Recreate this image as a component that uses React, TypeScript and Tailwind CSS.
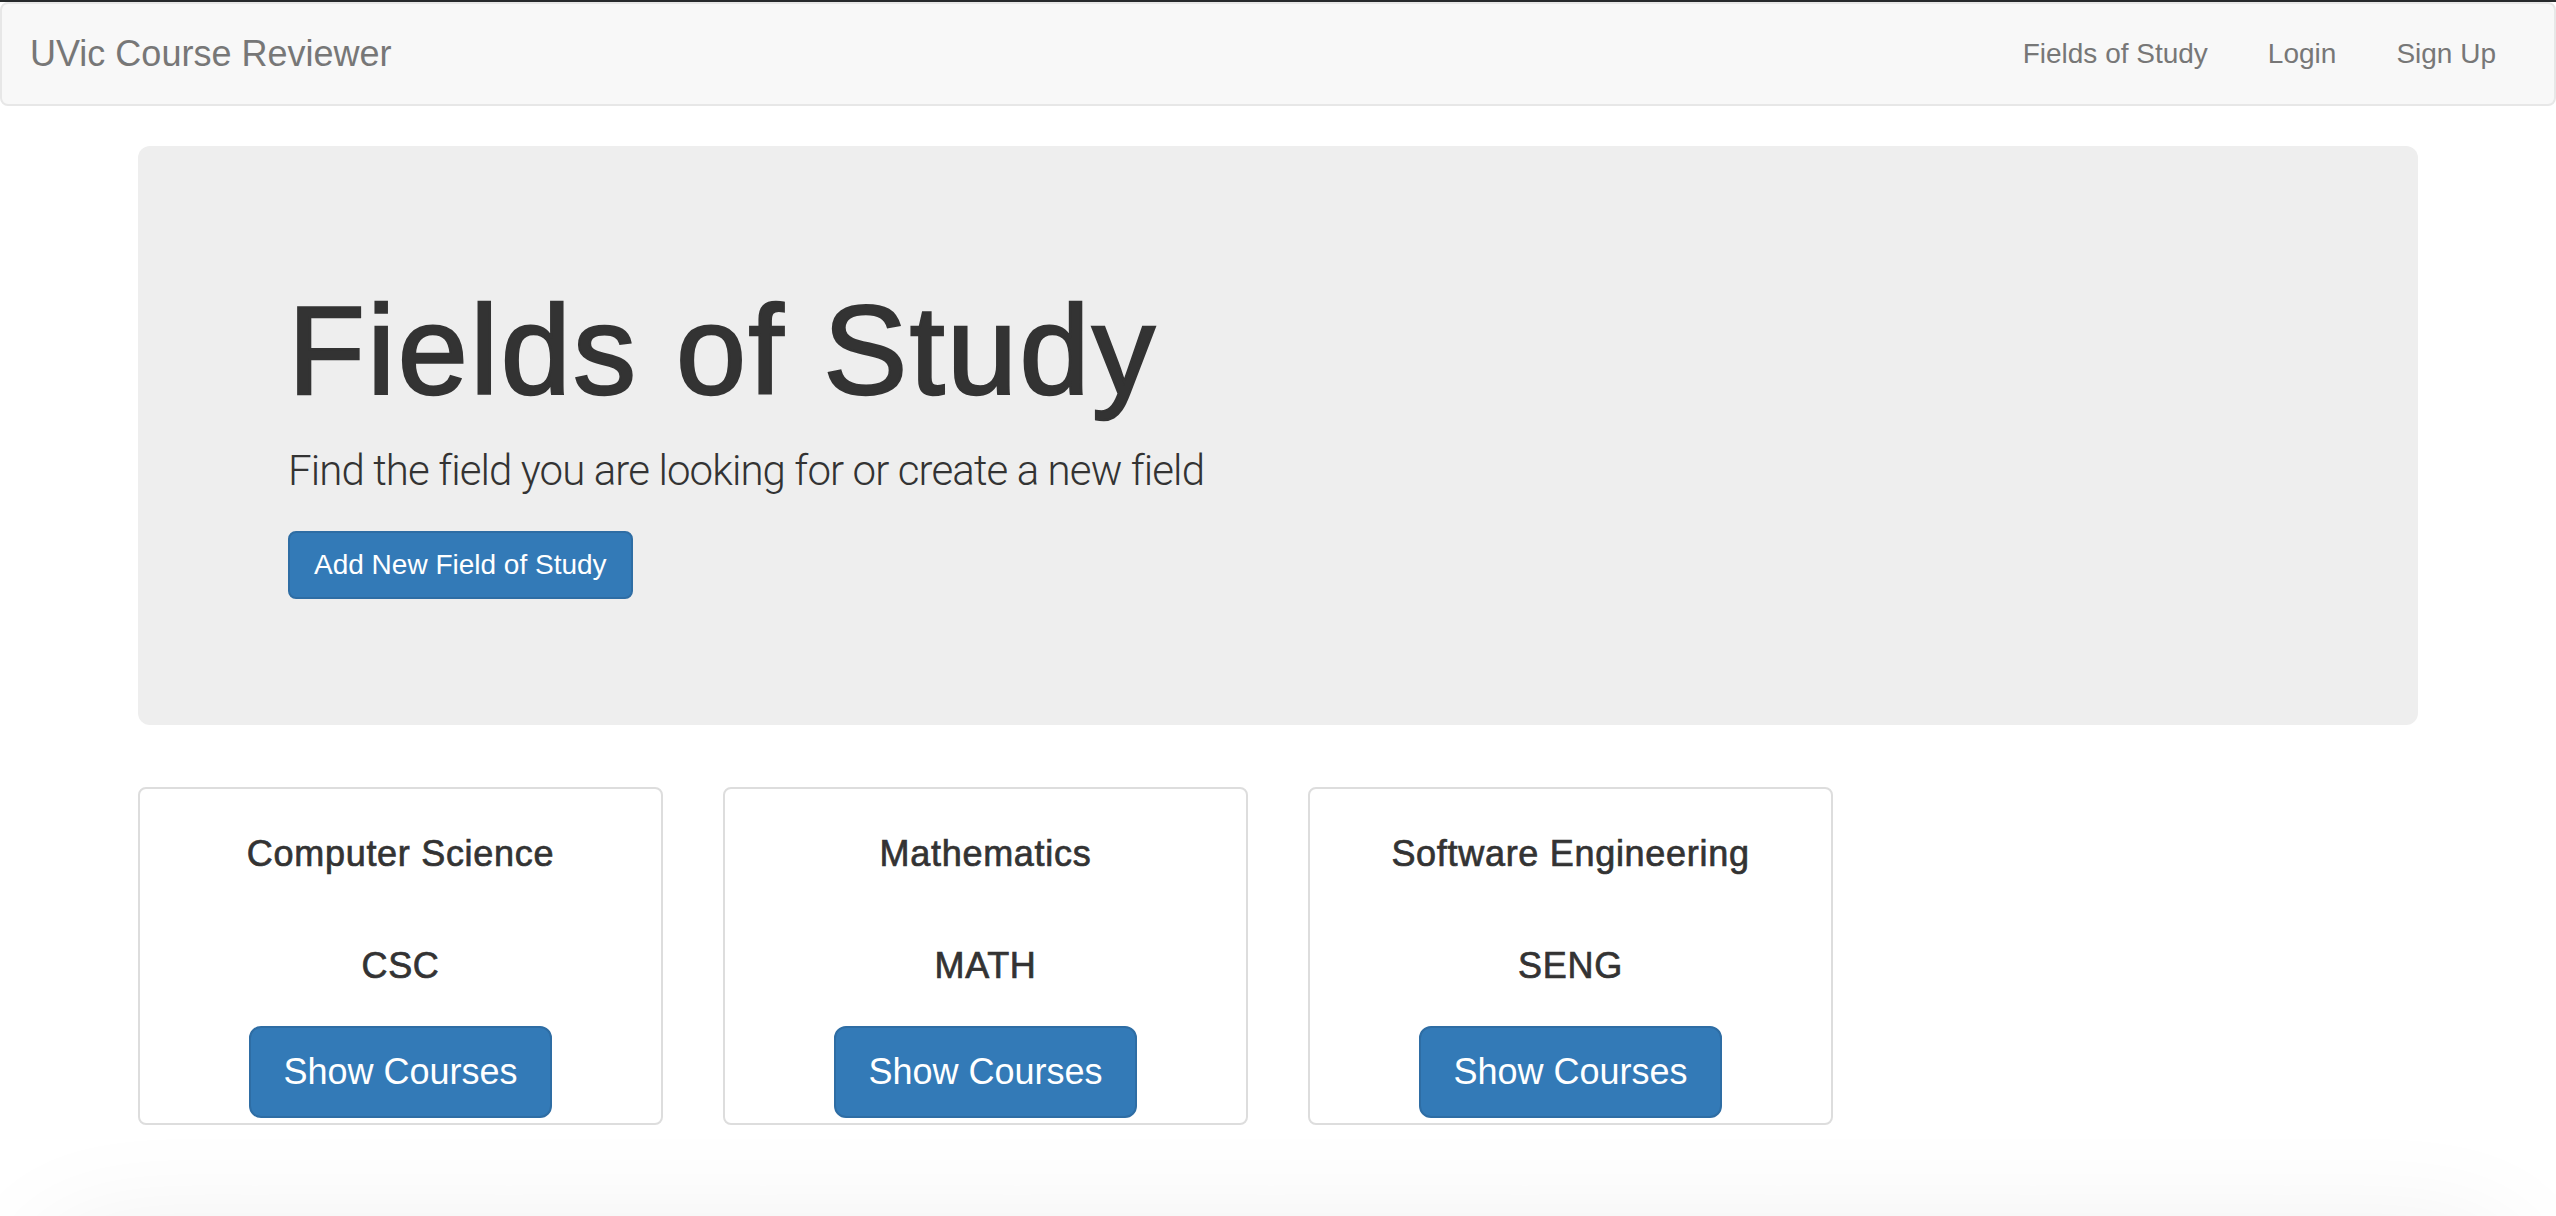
import React from "react";

const fields = [
  { name: "Computer Science", code: "CSC" },
  { name: "Mathematics", code: "MATH" },
  { name: "Software Engineering", code: "SENG" },
];

export default function App() {
  return (
    <div className="w-full h-[1216px] overflow-hidden bg-white text-[#333] font-['Liberation_Sans',Arial,sans-serif]">
      <div className="h-[2px] bg-[#272a2c]" />
      <nav className="h-[104px] bg-[#f8f8f8] border-2 border-[#e7e7e7] rounded-[8px] flex items-center justify-between pl-[28px] pr-[28px]">
        <a className="text-[36px] leading-[40px] text-[#777]">UVic Course Reviewer</a>
        <ul className="flex items-center">
          <li className="px-[30px] text-[28px] leading-[40px] text-[#777]">Fields of Study</li>
          <li className="px-[30px] text-[28px] leading-[40px] text-[#777]">Login</li>
          <li className="px-[30px] text-[28px] leading-[40px] text-[#777]">Sign Up</li>
        </ul>
      </nav>

      <div className="w-[2340px] mx-auto px-[30px]">
        <div className="mt-[40px] bg-[#eeeeee] rounded-[12px] px-[120px] py-[96px]">
          <div className="px-[30px]">
            <h1 className="mt-[40px] mb-[20px] text-[126px] leading-[138.6px] tracking-[2.4px] [-webkit-text-stroke:2.4px_#333] text-[#333]">
              Fields of Study
            </h1>
            <p className="mb-[30px] text-[42px] leading-[60px] tracking-[-0.9px] font-light font-['Roboto',sans-serif] text-[#333]">
              Find the field you are looking for or create a new field
            </p>
            <div className="mb-[30px]">
              <button className="h-[68px] px-[24px] bg-[#337ab7] border-2 border-[#2e6da4] rounded-[8px] text-white text-[28px] leading-[40px]">
                Add New Field of Study
              </button>
            </div>
          </div>
        </div>

        <div className="mt-[62px] flex gap-[60px]">
          {fields.map((f) => (
            <div
              key={f.code}
              className="w-[525px] h-[338px] border-2 border-[#dddddd] rounded-[8px] flex flex-col items-center pt-[45px]"
            >
              <h4 className="text-[36px] leading-[40px] tracking-[0.7px] [-webkit-text-stroke:0.7px_#333] text-[#333]">
                {f.name}
              </h4>
              <h4 className="mt-[72px] text-[36px] leading-[40px] tracking-[0.7px] [-webkit-text-stroke:0.7px_#333] text-[#333]">
                {f.code}
              </h4>
              <button className="mt-[40px] h-[92px] px-[32px] bg-[#337ab7] border-2 border-[#2e6da4] rounded-[12px] text-white text-[36px] leading-[48px]">
                Show Courses
              </button>
            </div>
          ))}
        </div>
      </div>

      <div className="mt-[110px] mx-[40px] h-[300px] rounded-[60px] bg-white shadow-[0_0_120px_rgba(0,0,0,0.08)]" />
    </div>
  );
}
